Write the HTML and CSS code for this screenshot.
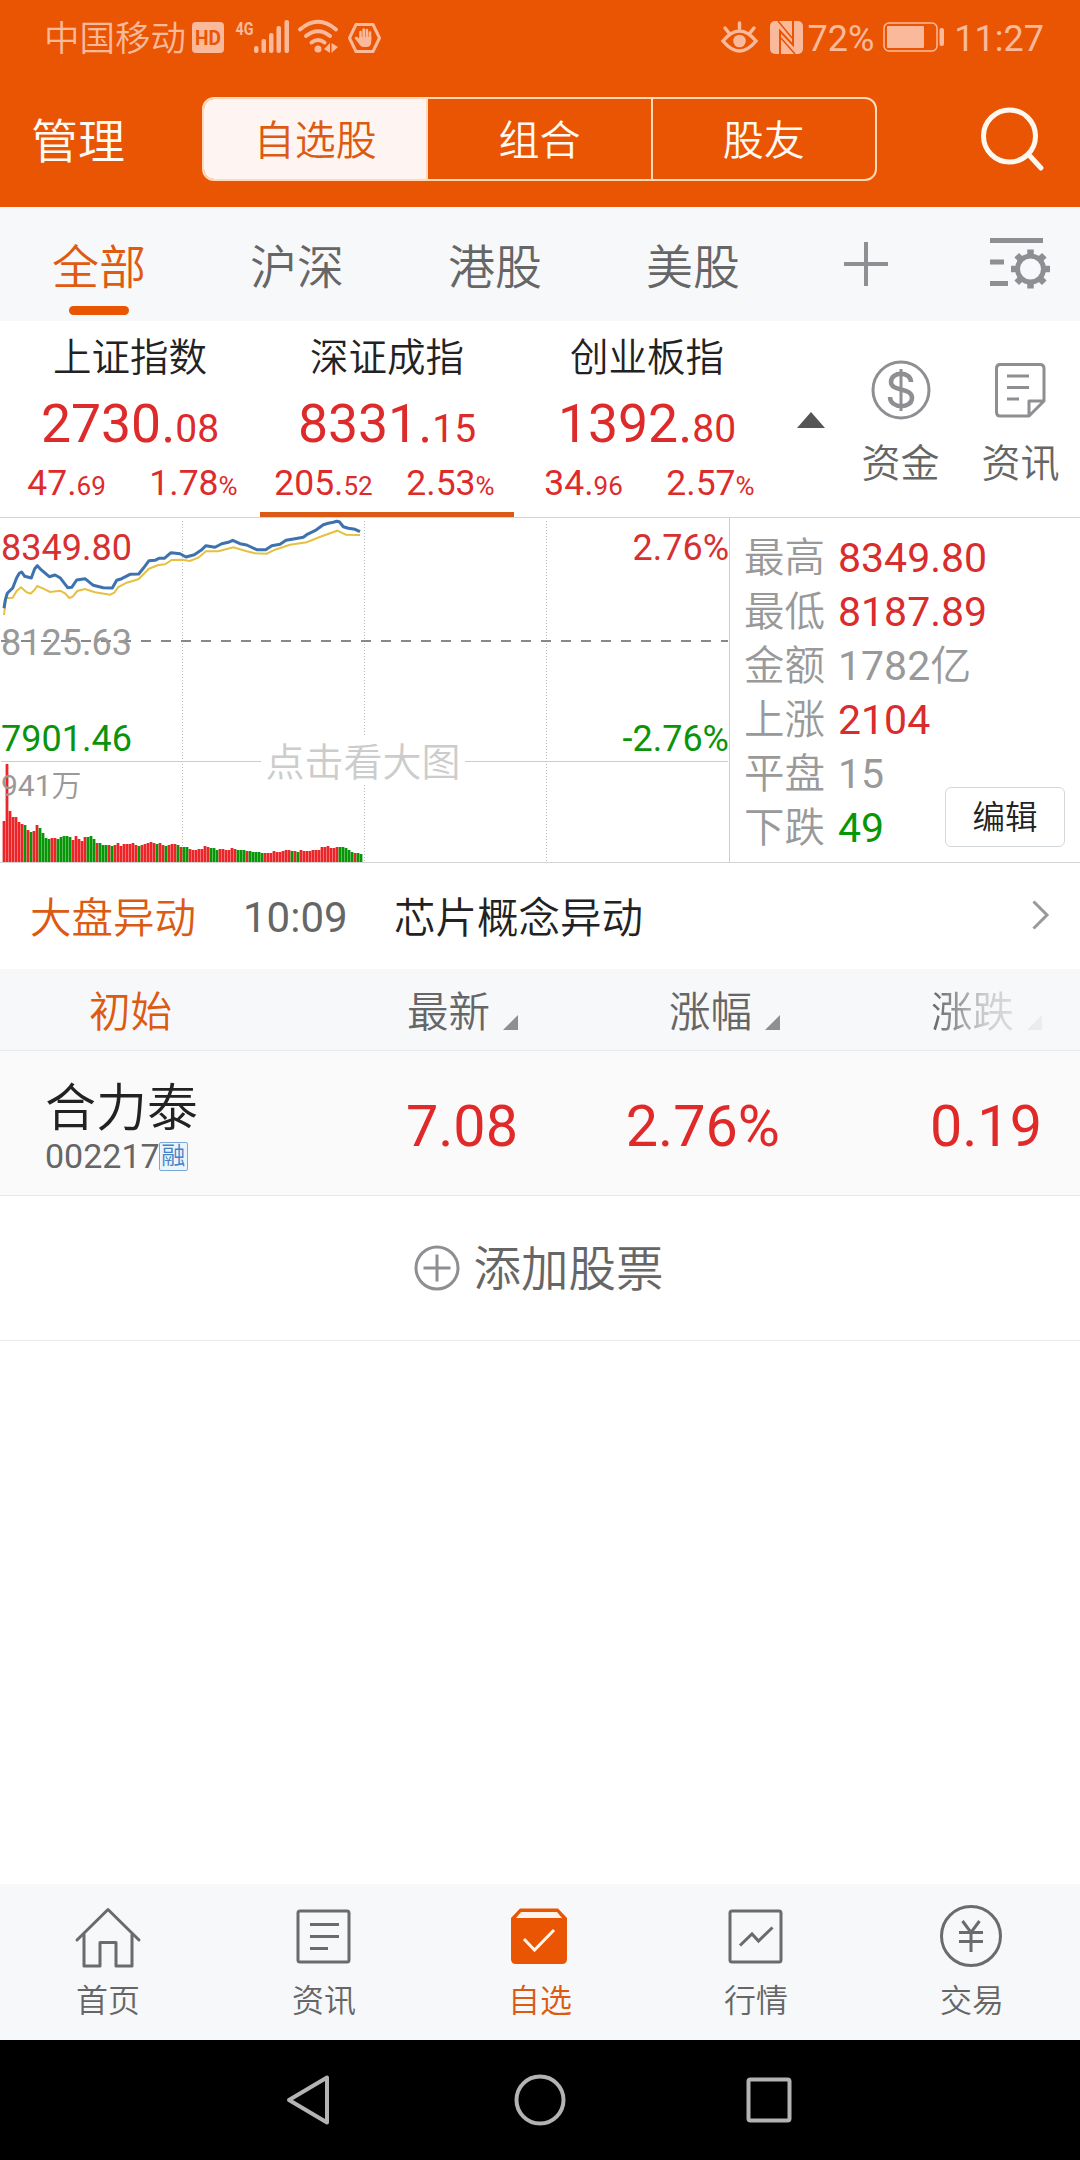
FILE: index.html
```html
<!DOCTYPE html>
<html lang="zh-CN">
<head>
  <meta charset="UTF-8" />
  <title>自选股</title>
  <link rel="stylesheet" href="styles.css">
</head>
<body>
  <div class="top">
    <div class="status">
      <span class="carrier">中国移动</span>
      <svg class="ico-left" width="192" height="36" viewBox="0 0 192 36" fill="#f9b99a">
        <rect x="0" y="3" width="32" height="31" rx="4" />
        <text x="3" y="26" font-size="21" font-weight="700" textLength="26" lengthAdjust="spacingAndGlyphs" fill="#ea5504">HD</text>
        <text x="43.500" y="16" font-size="18" font-weight="700" textLength="18" lengthAdjust="spacingAndGlyphs">4G</text>
        <rect x="62" y="27" width="4.500" height="7" rx="2" />
        <rect x="69.500" y="20" width="4.500" height="14" rx="2" />
        <rect x="77" y="14" width="4.500" height="20" rx="2" />
        <rect x="84.500" y="7" width="4.500" height="27" rx="2" />
        <rect x="92.500" y="1" width="4.500" height="33" rx="2" />
        <g fill="none" stroke="#f9b99a" stroke-width="4" stroke-linecap="round">
          <path d="M108 10.500 Q126 -5 144 10.500" />
          <path d="M114 17 Q126 7.500 138 17" />
          <path d="M119.500 23.500 Q126 18.500 132.500 23.500" />
          <path d="M164 5.500 H181 L187.500 19 L181 32.500 H164 L157.500 19 Z" stroke-width="3" stroke-linejoin="round" />
          <path d="M168.500 13 V20 M171.700 10.500 V20 M174.900 11 V20 M178 13.500 V20" stroke-width="2.600" />
        </g>
        <circle cx="126" cy="30" r="3.500" />
        <path d="M132 30 L138 24 V34 Z M139.500 24 L146 28 L139.500 34 Z" />
        <path d="M167.200 18 H179.300 V23 Q179 28 174.500 28 H171.500 Q169 28 167.500 25.500 L162.500 19 Q163.500 17 165.500 18 L167.200 20 Z" />
      </svg>
      <svg class="ico-right" width="82" height="36" viewBox="0 0 82 36" fill="none" stroke="#f9b99a" stroke-width="3.500" stroke-linecap="round">
        <path d="M2 22 Q18.500 2 35 22 Q18.500 42 2 22 Z M18.500 4 V9 M4 9 L8 14 M33 9 L29 14" />
        <circle cx="18.500" cy="22" r="6.300" fill="#f9b99a" stroke="none" />
        <rect x="49" y="2" width="33" height="33" rx="5" fill="#f9b99a" stroke="none" />
        <path d="M59 35 V12 L72 26 V2" stroke="#ea5504" stroke-width="2" stroke-linecap="butt" />
        <path d="M57 2 L71 19 M60 19 L74 35" stroke="#ea5504" stroke-width="1.500" stroke-linecap="butt" />
      </svg>
      <span class="pct">72%</span>
      <svg class="battery" width="62" height="30" viewBox="0 0 62 30">
        <rect x="1" y="1" width="53" height="28" rx="5" fill="none" stroke="#f9b99a" stroke-width="1.500" />
        <rect x="4" y="4" width="37" height="22" rx="1" fill="#f9b99a" />
        <rect x="56.500" y="6" width="4.500" height="18" rx="2" fill="#f9b99a" />
      </svg>
      <span>11:27</span>
    </div>
    <div class="titlebar">
      <span class="manage">管理</span>
      <div class="segments">
        <span class="segment active">自选股</span>
        <span class="segment">组合</span>
        <span class="segment">股友</span>
      </div>
      <svg class="search" width="66" height="68" viewBox="0 0 66 68" fill="none" stroke="#fff8f0" stroke-width="5" stroke-linecap="round">
        <circle cx="30.500" cy="31" r="26" />
        <path d="M50 50 L62 63" />
      </svg>
    </div>
  </div>

  <div class="tabs">
    <span class="tab active">全部</span>
    <span class="tab">沪深</span>
    <span class="tab">港股</span>
    <span class="tab">美股</span>
    <svg class="plus" width="44" height="44" viewBox="0 0 44 44" stroke="#8e8e93" stroke-width="4">
      <path d="M0 22 H44 M22 0 V44" />
    </svg>
    <svg class="gear" width="62" height="52" viewBox="0 0 62 52" fill="none" stroke="#8e8e93" stroke-width="5">
      <path d="M0 2.500 H53 M0 24 H14 M0 45.500 H18" />
      <circle cx="40.500" cy="31" r="13" stroke-width="5" />
      <path d="M40.500 11.500 V17 M40.500 45 V50.500 M21 31 H26.500 M54.500 31 H60 M26.700 17.200 L30.600 21.100 M50.400 40.900 L54.300 44.800 M54.300 17.200 L50.400 21.100 M30.600 40.900 L26.700 44.800" stroke-width="6.500" />
    </svg>
  </div>

  <div class="indices">
    <div class="index">
      <div class="index-name">上证指数</div>
      <div class="index-value">2730.<small>08</small></div>
      <div class="index-change"><span>47.<small>69</small></span><span>1.78<small>%</small></span></div>
    </div>
    <div class="index current">
      <div class="index-name">深证成指</div>
      <div class="index-value">8331.<small>15</small></div>
      <div class="index-change"><span>205.<small>52</small></span><span>2.53<small>%</small></span></div>
    </div>
    <div class="index">
      <div class="index-name">创业板指</div>
      <div class="index-value">1392.<small>80</small></div>
      <div class="index-change"><span>34.<small>96</small></span><span>2.57<small>%</small></span></div>
    </div>
    <svg class="collapse" width="28" height="16" viewBox="0 0 28 16"><path d="M0 16 L14 0 L28 16 Z" fill="#555" /></svg>
    <div class="shortcut">
      <svg width="60" height="60" viewBox="0 0 60 60" fill="none" stroke="#8e8e93">
        <circle cx="30" cy="30" r="28" stroke-width="3" />
        <path d="M40 22 C40 11 20 11 20 22 C20 32 41 27 41 38 C41 49 19 49 19 37" stroke-width="4.500" />
        <path d="M30 9 V51" stroke-width="3" />
      </svg>
      <span>资金</span>
    </div>
    <div class="shortcut">
      <svg width="60" height="60" viewBox="0 0 60 60" fill="none" stroke="#8e8e93" stroke-width="3" stroke-linejoin="round">
        <path d="M9 4.500 H49 Q53 4.500 53 8.500 V41 L38 56 H9 Q5.500 56 5.500 52 V8.500 Q5.500 4.500 9 4.500 Z M38 56 V41 H53" />
        <path d="M16 16 H38 M16 27.500 H38 M16 39 H28" />
      </svg>
      <span>资讯</span>
    </div>
  </div>

  <div class="market">
    <div class="chart">
      <svg width="729" height="344" viewBox="0 0 729 344">
        <path d="M182.500 3 V344 M364.500 3 V344 M546.500 3 V344" stroke="#bbb" stroke-width="1" stroke-dasharray="1 2" />
        <path d="M1 243.500 H728" stroke="#ccc" stroke-width="1" />
        <g id="volume"></g>
        <polyline fill="none" stroke="#e6c040" stroke-width="2" points="4,97 6,80 12.700,79.700 16.700,73 21,69.300 26.700,74.300 30.700,75.700 34.300,72 37.300,68 43.300,70.700 50,74 60,72.700 65,75.300 69.300,80 72.700,78.700 77.300,73 85,71 95,74.300 110,76.700 114.300,74.700 118.300,69 126.700,64.700 138.300,61.300 149,50.700 158.300,47 165,46.300 171.700,42 181.700,41.700 190,43 198.300,39.700 206,33.300 218.300,33.300 233.300,29.300 246.700,33.300 255,35.300 266.700,35.700 275,31.700 290,26.700 306.700,24.300 321.700,18.300 337.300,12.700 346,16.700 360,17" />
        <polyline fill="none" stroke="#3d72ae" stroke-width="3" stroke-linejoin="round" points="4,90.300 5.300,82 7.300,75.300 12.700,70 16.700,59.700 19.300,55.300 21.700,54 24.700,58.300 31.300,60 34.700,50.700 37.300,47.700 40.700,51.300 49.300,58.700 55,57 60,59.700 67.700,69.700 71.700,69.300 76.700,62 85,60.700 93.300,67.300 103.300,69.700 112.300,70 116.700,62.300 121.700,60.700 130,56.300 138.700,56 143.300,50.300 149,42.700 155,42.300 159,40.300 164.300,40.300 171,34.700 180,35.700 186,39 194.300,36.700 201,32.300 206,27.700 215,29.300 221.700,25.700 228.300,24.300 232.700,22.300 240,25.700 246.700,27 256.700,31.700 265.700,31.700 271.700,27.700 280,26.300 286,22.300 295,20.700 303.300,19.300 306.700,16.700 315,12.700 323.300,6.700 328.300,5.300 333.300,4.300 336.700,3.300 339.300,3.700 343.300,8.700 348.300,10.300 355,11.300 360,13.700" />
        <path d="M1 123 H728" stroke="#888" stroke-width="2" stroke-dasharray="10 10" />
      </svg>
      <span class="axis high">8349.80</span>
      <span class="axis mid">8125.63</span>
      <span class="axis low">7901.46</span>
      <span class="axis high-pct">2.76%</span>
      <span class="axis low-pct">-2.76%</span>
      <span class="axis vol">941<i class="han">万</i></span>
      <span class="enlarge">点击看大图</span>
    </div>
    <div class="stats">
      <div class="stat"><label>最高</label><span class="up">8349.80</span></div>
      <div class="stat"><label>最低</label><span class="up">8187.89</span></div>
      <div class="stat"><label>金额</label><span>1782<i class="han">亿</i></span></div>
      <div class="stat"><label>上涨</label><span class="up">2104</span></div>
      <div class="stat"><label>平盘</label><span>15</span></div>
      <div class="stat"><label>下跌</label><span class="down">49</span></div>
      <button class="edit">编辑</button>
    </div>
  </div>

  <div class="news">
    <span class="news-tag">大盘异动</span>
    <span class="news-time">10:09</span>
    <span class="news-title">芯片概念异动</span>
    <svg width="17" height="30" viewBox="0 0 17 30" fill="none" stroke="#999" stroke-width="3"><path d="M1.500 1.500 L15 15 L1.500 28.500" /></svg>
  </div>

  <div class="list-head">
    <span class="col-name">初始</span>
    <span class="col">最新<i class="sort"></i></span>
    <span class="col">涨幅<i class="sort"></i></span>
    <span class="col fade">涨跌<i class="sort"></i></span>
  </div>
  <div class="stock">
    <div class="stock-name">
      <div class="name">合力泰</div>
      <div class="code">002217<span class="badge">融</span></div>
    </div>
    <span class="num">7.08</span>
    <span class="num">2.76%</span>
    <span class="num">0.19</span>
  </div>
  <div class="add">
    <svg width="46" height="46" viewBox="0 0 46 46" fill="none" stroke="#8e8e93" stroke-width="3">
      <circle cx="23" cy="23" r="21" />
      <path d="M9.500 23 H36.500 M23 9.500 V36.500" />
    </svg>
    <span>添加股票</span>
  </div>

  <div class="tabbar">
    <div class="item">
      <svg width="66" height="66" viewBox="0 0 66 66" fill="none" stroke="#6b6b6b" stroke-width="3" stroke-linecap="round" stroke-linejoin="round">
        <path d="M2 36 L33 5.500 L64 36 M9 30 V62 H25 V38.500 H41 V62 H57 V30" />
      </svg>
      <span>首页</span>
    </div>
    <div class="item">
      <svg width="66" height="66" viewBox="0 0 66 66" fill="none" stroke="#6b6b6b" stroke-width="3">
        <rect x="7" y="7" width="51" height="51" rx="2" />
        <path d="M19 20.500 H48 M19 32.500 H48 M19 44.500 H37" />
      </svg>
      <span>资讯</span>
    </div>
    <div class="item active">
      <svg width="66" height="66" viewBox="0 0 66 66">
        <path d="M13 4.500 H51 L60 14 V55 Q60 60 55 60 H9 Q4 60 4 55 V14 Z" fill="#ea5504" />
        <path d="M14 8 H50 L55 14 H9 Z" fill="#fff3ea" />
        <path d="M17 35 L27.500 46 L47 26" fill="none" stroke="#fff3ea" stroke-width="3" />
      </svg>
      <span>自选</span>
    </div>
    <div class="item">
      <svg width="66" height="66" viewBox="0 0 66 66" fill="none" stroke="#6b6b6b" stroke-width="3">
        <rect x="7" y="7" width="51" height="51" rx="2" />
        <path d="M17 41.500 L29 30 L35.500 37 L49.500 23.500" />
      </svg>
      <span>行情</span>
    </div>
    <div class="item">
      <svg width="66" height="66" viewBox="0 0 66 66" fill="none" stroke="#6b6b6b" stroke-width="3">
        <circle cx="32" cy="32" r="29.500" />
        <path d="M23.500 17 L32 28.500 L40.500 17 M20 28.500 H44 M20 37.500 H44 M32 28.500 V48" />
      </svg>
      <span>交易</span>
    </div>
  </div>

  <div class="sysnav">
    <svg width="54" height="54" viewBox="0 0 54 54" fill="none" stroke="#b3b3b3" stroke-width="4" stroke-linejoin="round"><path d="M5 27 L43 4.500 V49.500 Z" /></svg>
    <svg width="54" height="54" viewBox="0 0 54 54" fill="none" stroke="#b3b3b3" stroke-width="4"><circle cx="27" cy="27" r="23.500" /></svg>
    <svg width="54" height="54" viewBox="0 0 54 54" fill="none" stroke="#b3b3b3" stroke-width="4"><rect x="6.500" y="6.500" width="41" height="41" rx="2" /></svg>
  </div>

  <script>
    // one bar per minute of the morning session, r = up, g = down
    const heights = [41,98,51,45,45,40,38,37,32,30,31,37,34,29,24,23,24,24,23,25,26,26,25,22,26,23,21,25,25,26,
      23,19,19,17,17,17,16,17,19,16,18,18,18,19,17,16,17,18,19,20,19,18,19,17,16,17,18,18,17,15,
      15,15,13,12,12,13,13,16,15,14,14,12,13,13,12,12,14,13,12,12,12,11,11,10,10,10,9,9,9,9,
      11,10,10,11,12,12,11,11,10,12,11,11,11,12,12,12,15,15,16,14,14,15,15,15,14,12,10,9,9,8];
    const colors = 'rrrrrrrgrgrrggggrrgggggrrrrrgggrgggrgrrrrrrrrgrrrrrgrrgrrrgr' +
      'ggrrrrrrrgggrrrrrrgggrgggggrrrrrrrrrgrgrrrrrrrrrrrrrgggggrgg';
    const volume = document.getElementById('volume');
    heights.forEach(function(h, i) {
      const bar = document.createElementNS('http://www.w3.org/2000/svg', 'rect');
      bar.setAttribute('x', 2.6 + i * 3);
      bar.setAttribute('y', 344 - h);
      bar.setAttribute('width', 2.8);
      bar.setAttribute('height', h);
      bar.setAttribute('fill', colors[i] === 'g' ? '#079607' : '#ec2528');
      volume.appendChild(bar);
    });
  </script>
</body>
</html>
```

FILE: styles.css
```css
* { box-sizing: border-box; }
body { margin: 0; width: 1080px; height: 2160px; display: flex; flex-direction: column; background: #fff; color: #222; font-family: Roboto, "Noto Sans CJK SC", sans-serif; overflow: hidden; }
svg { display: block; flex: none; overflow: visible; }
small { font-size: inherit; }
i { font-style: normal; }
.han, .carrier, .manage, .segment, .tab, .index-name, .shortcut, .enlarge, label, .edit, .news-tag, .news-title, .col-name, .col, .name, .badge, .add, .item { font-weight: 350; }

/* header */
.top { height: 207px; background: #ea5504; color: #fffaf4; }
.status { height: 78px; padding: 0 36px 0 44px; display: flex; align-items: center; font-size: 36px; color: #f9b99a; line-height: 78px; }
.status svg { margin-bottom: 5px; }
.status svg text { font-family: Roboto, sans-serif; }
.carrier { width: 145px; font-size: 35.500px; line-height: 80px; }
.ico-left { margin-left: 3px; }
.ico-right { margin-left: auto; }
.pct { margin: 0 9px 0 5px; }
.battery { margin-right: 9px; }
.titlebar { height: 124px; display: flex; align-items: center; padding: 0 32px 2px 31px; }
.manage { font-size: 47px; width: 171px; line-height: 70px; padding-top: 5px; }
.segments { width: 675px; height: 84px; display: flex; border: 2px solid #ffd9b8; border-radius: 12px; overflow: hidden; }
.segment { flex: 1; text-align: center; font-size: 41px; line-height: 85px; border-left: 2px solid #ffd9b8; }
.segment.active { background: #fef5f2; color: #dc5a12; border-left: none; }
.search { margin: 0 3px 0 auto; }

/* market tabs */
.tabs { height: 114px; display: flex; align-items: center; background: #f7f8fa; color: #666; }
.tab { width: 198px; height: 114px; line-height: 121px; font-size: 47px; text-align: center; position: relative; }
.tab.active { color: #e05a10; }
.tab.active::after { content: ""; position: absolute; left: 69px; bottom: 6px; width: 60px; height: 9px; border-radius: 5px; background: #ea5504; }
.plus { margin-left: 52px; }
.gear { margin: 0 28px 0 auto; }

/* index summary */
.indices { height: 197px; display: flex; padding-left: 3px; border-bottom: 1px solid #d4d4d4; }
.index { width: 254px; height: 196px; margin-right: 6px; text-align: center; color: #dd2b2b; border-bottom: 5px solid transparent; }
.index:first-child { margin-right: 3px; }
.index.current { border-bottom-color: #dc5b14; }
.index-name { color: #222; font-size: 38.500px; line-height: 73px; }
.index-value { font-size: 53.500px; line-height: 60px; height: 60px; }
.index-value small { font-size: 39px; }
.index-change { display: flex; font-size: 35.500px; line-height: 58px; }
.index-change span { flex: 1; }
.index-change small { font-size: 26px; }
.collapse { margin: 91px 32px 0 17px; }
.shortcut { width: 87px; margin-right: 33px; display: flex; flex-direction: column; align-items: center; padding-top: 39px; font-size: 39px; line-height: 50px; color: #666; white-space: nowrap; }
.shortcut:last-child { margin-right: 0; }
.shortcut span { margin-top: 19px; }

/* intraday chart */
.market { height: 345px; display: flex; border-bottom: 1px solid #d4d4d4; }
.chart { position: relative; width: 730px; border-right: 1px solid #ccc; }
.axis { position: absolute; left: 1px; font-size: 36px; line-height: 42px; color: #999; }
.high, .high-pct { top: 9px; color: #d73030; }
.mid { top: 104px; }
.low, .low-pct { top: 200px; color: #0c930c; }
.high-pct, .low-pct { left: auto; right: 0; }
.vol { top: 247px; font-size: 30px; }
.enlarge { position: absolute; left: 261px; top: 219px; width: 204px; height: 47px; background: #fff; color: #ccc; font-size: 39px; line-height: 53px; text-align: center; }
.stats { position: relative; flex: 1; padding: 13px 0 0 14px; color: #999; }
.stat { display: flex; font-size: 41px; line-height: 54px; }
.stat label { width: 94px; font-size: 40.500px; line-height: 55px; height: 54px; }
.up { color: #d92c2c; }
.down { color: #089608; }
.edit { position: absolute; right: 15px; bottom: 15px; width: 120px; height: 60px; padding: 3px 0 0; background: #fff; border: 1px solid #d3d8dc; border-radius: 6px; font-family: inherit; font-size: 32.500px; line-height: 55px; color: #222; }

/* headline */
.news { height: 106px; display: flex; align-items: center; padding: 0 31px 2px 30px; font-size: 41.500px; }
.news-tag { color: #dc5a12; width: 213px; }
.news-time { color: #666; width: 151px; font-size: 42px; padding-top: 4px; }
.news svg { margin-left: auto; }

/* watch list */
.list-head { height: 82px; display: flex; background: #f7f8fa; border-bottom: 1px solid #e8eaed; font-size: 41.500px; line-height: 88px; color: #666; }
.col-name { width: 256px; padding-left: 89px; color: #dc5a12; }
.col { width: 262px; display: flex; justify-content: flex-end; }
.sort { margin: 46px 0 0 13px; width: 0; height: 0; border-left: 15px solid transparent; border-bottom: 15px solid #8e8e93; }
.fade { -webkit-mask-image: linear-gradient(to right, #000 58%, rgba(0,0,0,.3) 78%, rgba(0,0,0,.1) 98%); mask-image: linear-gradient(to right, #000 58%, rgba(0,0,0,.3) 78%, rgba(0,0,0,.1) 98%); }
.stock { height: 145px; display: flex; background: #fafafa; border-bottom: 1px solid #e8e8e8; }
.stock-name { width: 256px; padding: 28px 0 0 45px; }
.name { font-size: 51px; line-height: 60px; }
.code { display: flex; align-items: center; font-size: 34px; line-height: 34px; color: #666; }
.badge { width: 29px; height: 29px; margin-left: -1px; border: 1px solid #7aa9d8; border-radius: 2px; background: #eaf5fd; color: #4583c4; font-size: 24px; line-height: 27px; text-align: center; }
.num { width: 262px; text-align: right; font-size: 57.500px; line-height: 152px; color: #e02a2a; }
.add { height: 145px; display: flex; align-items: center; justify-content: center; padding-right: 3px; border-bottom: 1px solid #eaeaea; font-size: 47.500px; line-height: 60px; color: #666; }
.add span { margin: 3px 0 0 14px; }

/* bottom bars */
.tabbar { margin-top: auto; height: 156px; display: flex; background: #f7f8fa; color: #666; }
.item { flex: 1; display: flex; flex-direction: column; align-items: center; padding-top: 20px; font-size: 32px; line-height: 40px; }
.item span { margin-top: 11px; }
.item.active { color: #dc5a12; }
.sysnav { height: 120px; display: flex; align-items: center; justify-content: center; gap: 175px; background: #000; }
```
